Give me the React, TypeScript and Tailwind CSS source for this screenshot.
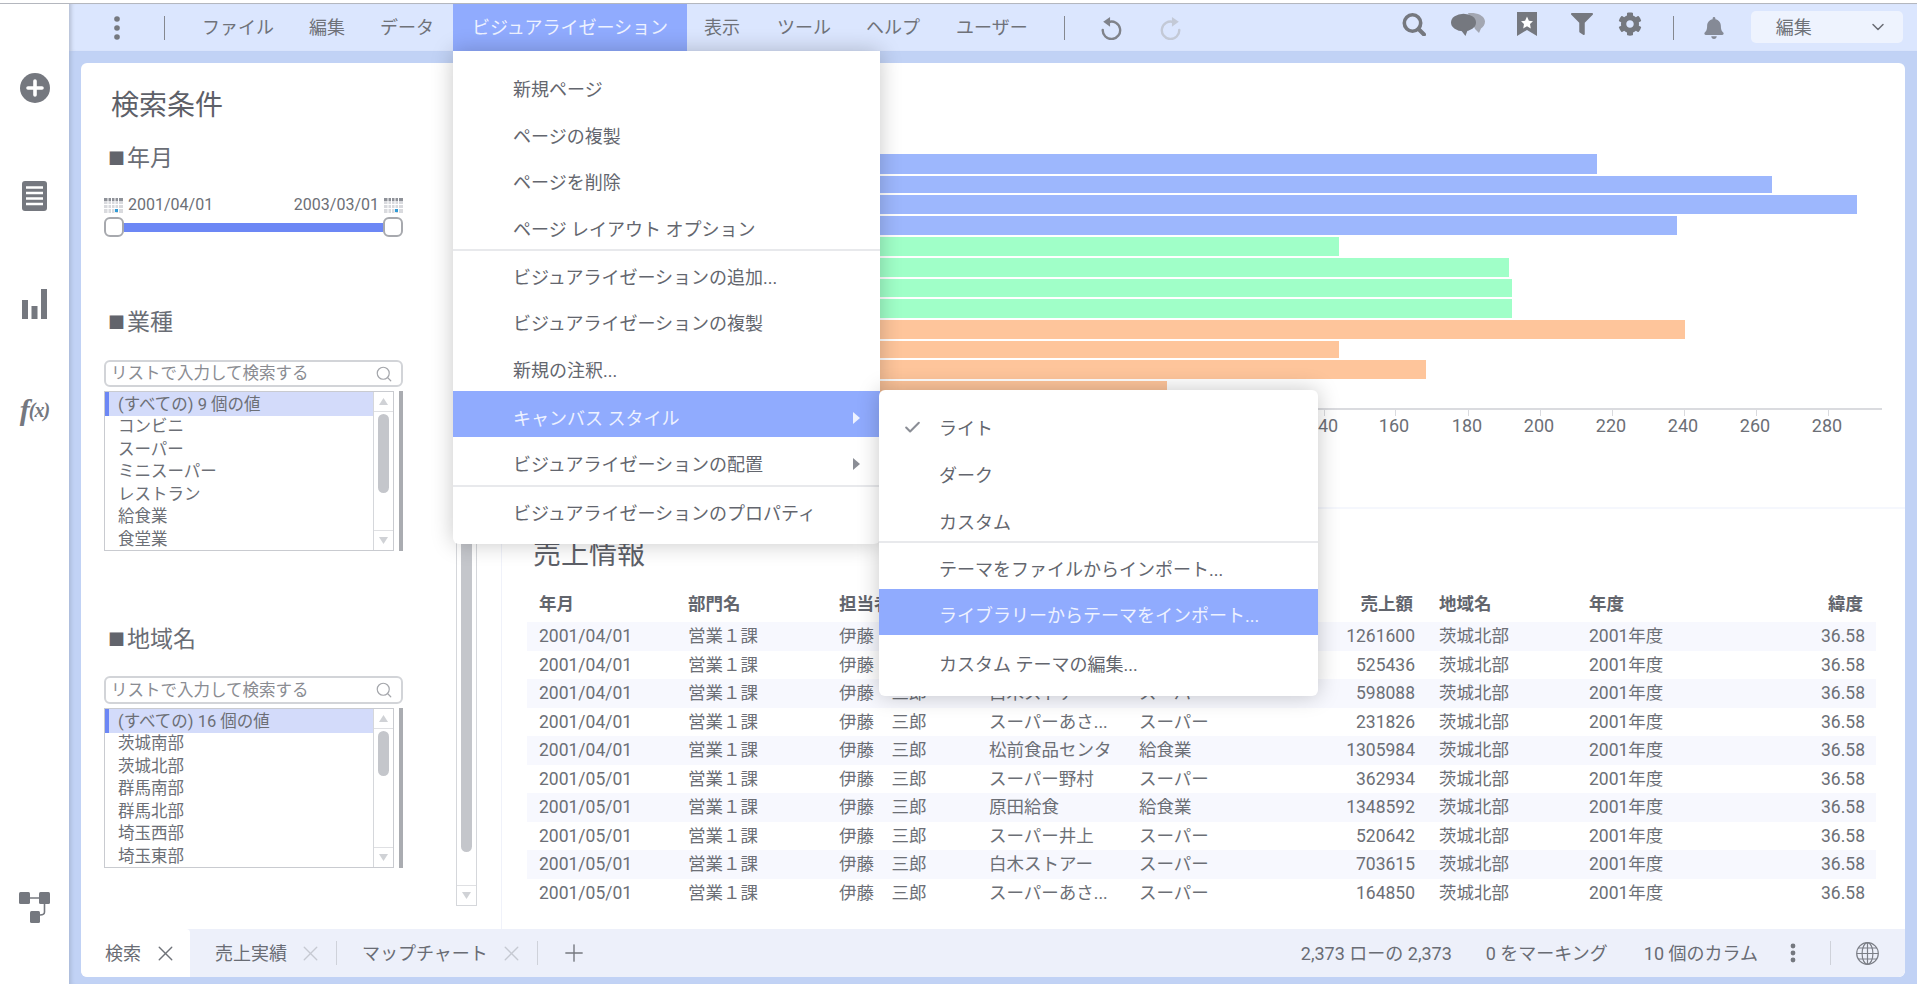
import React from "react";
import { FaFilter, FaCog, FaBell } from "react-icons/fa";
import { X, Plus, Search, ChevronDown, Check } from "lucide-react";

const MUTED = "#75787f";

function Dots({ color = MUTED }: { color?: string }) {
  return (
    <svg width="6" height="24" viewBox="0 0 6 24" className="shrink-0">
      <circle cx="3" cy="3" r="2.8" fill={color} />
      <circle cx="3" cy="12" r="2.8" fill={color} />
      <circle cx="3" cy="21" r="2.8" fill={color} />
    </svg>
  );
}

function CircleArrow({ flip, color }: { flip?: boolean; color: string }) {
  return (
    <svg width="22" height="24" viewBox="0 0 24 26" className={flip ? "-scale-x-100" : ""}>
      <path d="M9.5 6.5 A 9.5 9.5 0 1 1 3 15" fill="none" stroke={color} strokeWidth="2.6" strokeLinecap="round" />
      <path d="M11 1 L11 11.5 L3.5 6.3 Z" fill={color} />
    </svg>
  );
}

function BookmarkStar() {
  return (
    <svg width="20" height="24" viewBox="0 0 20 24">
      <path d="M0 0 H20 V24 L10 18 L0 24 Z" fill={MUTED} />
      <path d="M10 4.5 L11.9 8.7 L16 9.2 L13 12.1 L13.8 16.4 L10 14.2 L6.2 16.4 L7 12.1 L4 9.2 L8.1 8.7 Z" fill="#fff" />
    </svg>
  );
}

function ChatIcon() {
  return (
    <svg width="34" height="23" viewBox="0 0 34 23">
      <path d="M17 0 C26 -1 34 3 34 8.5 C34 12 32 14 30 15.5 L28 20 L24 16 Z" fill="#a3a7b2" />
      <ellipse cx="12.5" cy="9.5" rx="12.5" ry="8.8" fill={MUTED} />
      <path d="M9 16 L14.5 23 L17 16 Z" fill={MUTED} />
    </svg>
  );
}

function SearchGlyph() {
  return (
    <svg width="24" height="23" viewBox="0 0 24 23" className="block">
      <circle cx="10.5" cy="10" r="8.2" fill="none" stroke={MUTED} strokeWidth="3.6" />
      <path d="M16.5 16 L22 21.5" stroke={MUTED} strokeWidth="4" strokeLinecap="round" />
    </svg>
  );
}

function GlobeGlyph() {
  return (
    <svg width="23" height="23" viewBox="0 0 23 23" fill="none" stroke="#7c7f87" strokeWidth="1.2" className="block">
      <circle cx="11.5" cy="11.5" r="10.8" />
      <ellipse cx="11.5" cy="11.5" rx="5.4" ry="10.8" />
      <path d="M11.5 0.7 V22.3 M0.7 11.5 H22.3 M2.3 6 H20.7 M2.3 17 H20.7" />
    </svg>
  );
}

function CalendarIcon() {
  return (
    <svg width="19" height="15" viewBox="0 0 19 15" className="shrink-0">
      <rect x="0" y="0" width="19" height="15" fill="#d9dade" />
      <rect x="0" y="0" width="19" height="3" fill="#8e9198" />
      {[3.5, 7, 10.5, 14].map((x) => (
        <rect key={x} x={x} y="0" width="1" height="15" fill="#fff" />
      ))}
      {[6, 10].map((y) => (
        <rect key={y} x="0" y={y} width="19" height="1" fill="#fff" />
      ))}
      <rect x="11" y="11" width="3" height="3" fill="#2f9bd6" />
    </svg>
  );
}

function Rail() {
  return (
    <div className="w-[69px] shrink-0 bg-white flex flex-col items-center text-[#75787f]">
      <svg width="30" height="30" viewBox="0 0 30 30" className="mt-[69px]">
        <circle cx="15" cy="15" r="15" fill={MUTED} />
        <path d="M15 8 V22 M8 15 H22" stroke="#fff" strokeWidth="3.6" strokeLinecap="round" />
      </svg>
      <svg width="25" height="30" viewBox="0 0 25 30" className="mt-[78px]">
        <rect width="25" height="30" rx="3" fill={MUTED} />
        <path d="M4 6.5 H21 M4 12 H21 M4 17.5 H21 M4 23 H21" stroke="#fff" strokeWidth="2.4" />
      </svg>
      <svg width="25" height="30" viewBox="0 0 25 30" className="mt-[78px]">
        <rect x="0" y="11" width="6" height="19" fill={MUTED} />
        <rect x="9.5" y="17" width="6" height="13" fill={MUTED} />
        <rect x="19" y="0" width="6" height="30" fill={MUTED} />
      </svg>
      <div className="mt-[78px] h-[26px] flex items-center font-['Liberation_Serif',serif] italic font-bold text-[30px] leading-none tracking-[-1px]">
        f<span className="text-[20px]">(x)</span>
      </div>
      <svg width="31" height="31" viewBox="0 0 31 31" className="mt-auto mb-[61px]">
        <rect x="0" y="0" width="11" height="12" rx="1.5" fill={MUTED} />
        <rect x="20" y="0" width="11" height="12" rx="1.5" fill={MUTED} />
        <rect x="11" y="19" width="10" height="12" rx="1.5" fill={MUTED} />
        <path d="M11 6 H20 M25.5 12 V20 Q25.5 23 21 23" stroke={MUTED} strokeWidth="1.6" fill="none" />
      </svg>
    </div>
  );
}

function Toolbar() {
  return (
    <div className="h-[47px] shrink-0 bg-[#dbe6fe] shadow-[inset_5px_0_4px_-3px_rgba(0,0,0,0.18)] flex items-center text-[18px] text-[#6f7279]">
      <div className="ml-[45px]"><Dots /></div>
      <div className="ml-[44px] w-px h-[24px] bg-[#85888f]" />
      <span className="ml-[37px] whitespace-nowrap">ファイル</span>
      <span className="ml-[35px] whitespace-nowrap">編集</span>
      <span className="ml-[35px] whitespace-nowrap">データ</span>
      <div className="ml-[19px] w-[234px] h-full bg-[#90abfe] text-[#eef2ff] flex items-center pl-[19px] whitespace-nowrap">
        ビジュアライゼーション
      </div>
      <span className="ml-[17px] whitespace-nowrap">表示</span>
      <span className="ml-[37px] whitespace-nowrap">ツール</span>
      <span className="ml-[35px] whitespace-nowrap">ヘルプ</span>
      <span className="ml-[36px] whitespace-nowrap">ユーザー</span>
      <div className="ml-[36px] w-px h-[24px] bg-[#85888f]" />
      <div className="ml-[35px] w-[24px]"><CircleArrow color="#7f828a" /></div>
      <div className="ml-[36px] w-[24px]"><CircleArrow flip color="#c3c9d6" /></div>
      <div className="ml-[218px] mb-[7px] w-[24px]"><SearchGlyph /></div>
      <div className="ml-[25px] mb-[7px] w-[36px]"><ChatIcon /></div>
      <div className="ml-[30px] mb-[7px] w-[20px]"><BookmarkStar /></div>
      <div className="ml-[34px] mb-[7px] w-[22px] text-[#75787f]"><FaFilter size={22} /></div>
      <div className="ml-[25px] mb-[7px] w-[24px] text-[#75787f]"><FaCog size={24} /></div>
      <div className="ml-[31px] w-px h-[24px] bg-[#85888f]" />
      <div className="ml-[29px] w-[20px] text-[#858a96]"><FaBell size={22} /></div>
      <div className="ml-[28px] w-[152px] h-[32px] mb-[1px] bg-[#eef3fe] rounded-[5px] flex items-center justify-between pl-[25px] pr-[15px]">
        <span>編集</span>
        <ChevronDown size={20} strokeWidth={1.8} className="text-[#696c74]" />
      </div>
    </div>
  );
}

function Triangle({ up }: { up?: boolean }) {
  return (
    <svg width="9" height="7" viewBox="0 0 9 7">
      <path d={up ? "M4.5 0 L9 7 H0 Z" : "M0 0 H9 L4.5 7 Z"} fill="#d0d2d6" />
    </svg>
  );
}

function ListBox({ items, thumb }: { items: string[]; thumb: string }) {
  return (
    <div className="mt-[4px] flex w-[299px] h-[160px]">
      <div className="w-[290px] h-full border border-[#c9cbd0] flex">
        <div className="flex-1 overflow-hidden text-[16.5px] text-[#6c6f76]">
          {items.map((t, i) => (
            <div
              key={t}
              className={
                i === 0
                  ? "h-[24px] leading-[26px] border-l-4 border-[#6c87f5] bg-[#d3dbfa] pl-[9px] whitespace-nowrap"
                  : "h-[22.5px] leading-[22.5px] pl-[13px] whitespace-nowrap"
              }
            >
              {t}
            </div>
          ))}
        </div>
        <div className="w-[20px] border-l border-[#d5d7db] flex flex-col items-center">
          <div className="w-full h-[20px] border-b border-[#dfe0e3] flex items-center justify-center"><Triangle up /></div>
          <div className="flex-1 pt-[2px]">
            <div className={thumb} />
          </div>
          <div className="w-full h-[20px] border-t border-[#dfe0e3] flex items-center justify-center"><Triangle /></div>
        </div>
      </div>
      <div className="ml-[5px] w-[4px] h-full bg-[#aaacb1]" />
    </div>
  );
}

function FieldLabel({ children, className }: { children: string; className: string }) {
  return (
    <div className={className}>
      <span className="inline-block w-[19px] text-[17px] text-[#62646c] leading-[30px] align-top -ml-[1px]">■</span>
      <span className="text-[23px] leading-[30px] text-[#6a6d75]">{children}</span>
    </div>
  );
}

function SearchBox({ className }: { className: string }) {
  return (
    <div className={className}>
      <span className="text-[16.5px] text-[#8a8c92] whitespace-nowrap -ml-[2px] pt-[2px]">リストで入力して検索する</span>
      <Search size={18} strokeWidth={1.6} className="text-[#a4a6ab]" />
    </div>
  );
}

const TYPES = ["(すべての) 9 個の値", "コンビニ", "スーパー", "ミニスーパー", "レストラン", "給食業", "食堂業"];
const AREAS = ["(すべての) 16 個の値", "茨城南部", "茨城北部", "群馬南部", "群馬北部", "埼玉西部", "埼玉東部"];

function LeftPanel() {
  return (
    <div className="w-[421px] shrink-0 border-r border-[#f0f2fa] flex">
      <div className="w-[375px] shrink-0">
        <div className="pl-[30px] pt-[23px] text-[28px] leading-[40px] text-[#5d6068]">検索条件</div>
        <div className="pl-[23px]">
          <FieldLabel className="mt-[18px] pl-[5px] h-[30px]">年月</FieldLabel>
          <div className="mt-[21px] w-[299px] h-[20px] flex items-center text-[16px] text-[#6c6f76]">
            <CalendarIcon />
            <span className="ml-[5px]">2001/04/01</span>
            <span className="ml-auto mr-[5px]">2003/03/01</span>
            <CalendarIcon />
          </div>
          <div className="mt-[2px] w-[299px] h-[20px] flex items-center">
            <div className="w-[20px] h-[20px] rounded-[6px] border-2 border-[#a7a9ae] bg-white shrink-0" />
            <div className="flex-1 h-[9px] bg-[#6c87f5]" />
            <div className="w-[20px] h-[20px] rounded-[6px] border-2 border-[#a7a9ae] bg-white shrink-0" />
          </div>
          <FieldLabel className="mt-[71px] pl-[5px] h-[30px]">業種</FieldLabel>
          <SearchBox className="mt-[22px] w-[299px] h-[27px] border-2 border-[#d2d4d8] rounded-[6px] flex items-center justify-between pl-[7px] pr-[8px]" />
          <ListBox items={TYPES} thumb="w-[11px] h-[79px] rounded-full bg-[#c4c6cb]" />
          <FieldLabel className="mt-[74px] pl-[5px] h-[30px]">地域名</FieldLabel>
          <SearchBox className="mt-[21px] w-[299px] h-[28px] border-2 border-[#d2d4d8] rounded-[6px] flex items-center justify-between pl-[7px] pr-[8px]" />
          <ListBox items={AREAS} thumb="w-[11px] h-[45px] rounded-full bg-[#c4c6cb]" />
        </div>
      </div>
      <div className="mt-[7px] w-[21px] h-[836px] border border-[#d5d7db] flex flex-col items-center">
        <div className="flex-1 w-full flex justify-center">
          <div className="w-[11px] h-[781px] rounded-b-full bg-[#c4c6cb]" />
        </div>
        <div className="w-full h-[20px] border-t border-[#dfe0e3] flex items-center justify-center"><Triangle /></div>
      </div>
    </div>
  );
}

const BARS: [number, number, number, string][] = [
  [154, 20, 1597, "#9db7fd"],
  [176, 17, 1772, "#9db7fd"],
  [195, 19, 1857, "#9db7fd"],
  [216, 19, 1677, "#9db7fd"],
  [237, 19, 1339, "#a0ffc8"],
  [258, 19, 1509, "#a0ffc8"],
  [279, 18, 1512, "#a0ffc8"],
  [299, 19, 1512, "#a0ffc8"],
  [320, 19, 1685, "#fec59b"],
  [341, 17, 1339, "#fec59b"],
  [360, 19, 1426, "#fec59b"],
  [381, 19, 1167, "#fec59b"],
];

const TICKS: [number, string][] = [
  [1324, "140"],
  [1395, "160"],
  [1468, "180"],
  [1540, "200"],
  [1612, "220"],
  [1684, "240"],
  [1756, "260"],
  [1828, "280"],
];

function Chart() {
  return (
    <div className="h-[446px] shrink-0 border-b-2 border-[#f5f7fd]">
      <svg width="1403" height="444" viewBox="502 63 1403 444" className="block">
        {BARS.map(([y, h, x2, fill]) => (
          <rect key={y} x="620" y={y} width={x2 - 620} height={h} fill={fill} />
        ))}
        <rect x="620" y="408" width="1262" height="2" fill="#dadbdf" />
        {TICKS.map(([x, t]) => (
          <g key={t}>
            <rect x={x} y="410" width="1" height="6" fill="#dadbdf" />
            <text x={x - 1} y="432" textAnchor="middle" fontSize="18" fill="#6c6f76" fontFamily="Roboto, sans-serif">
              {t}
            </text>
          </g>
        ))}
      </svg>
    </div>
  );
}

type Row = [string, string, string, string];
const ROWS: Row[] = [
  ["2001/04/01", "松前食品センタ", "給食業", "1261600"],
  ["2001/04/01", "スーパー井上", "スーパー", "525436"],
  ["2001/04/01", "白木ストアー", "スーパー", "598088"],
  ["2001/04/01", "スーパーあさ...", "スーパー", "231826"],
  ["2001/04/01", "松前食品センタ", "給食業", "1305984"],
  ["2001/05/01", "スーパー野村", "スーパー", "362934"],
  ["2001/05/01", "原田給食", "給食業", "1348592"],
  ["2001/05/01", "スーパー井上", "スーパー", "520642"],
  ["2001/05/01", "白木ストアー", "スーパー", "703615"],
  ["2001/05/01", "スーパーあさ...", "スーパー", "164850"],
];

function SalesTable() {
  const grid = "grid grid-cols-[149px_151px_150px_150px_150px_126px_174px_150px_126px] pl-[12px] pr-[11px] items-center whitespace-nowrap";
  return (
    <div className="flex-1 pt-[26px]">
      <div className="pl-[31px] text-[28px] leading-[40px] text-[#5d6068]">売上情報</div>
      <div className="mt-[15px] ml-[25px] w-[1349px] text-[17.5px] text-[#6c6f76]">
        <div className={`${grid} h-[32px] pb-[3px] font-bold text-[#62656d]`}>
          <span>年月</span>
          <span>部門名</span>
          <span>担当者</span>
          <span>得意先</span>
          <span>業種</span>
          <span className="text-right pr-[2px]">売上額</span>
          <span className="pl-[24px]">地域名</span>
          <span>年度</span>
          <span className="text-right pr-[2px]">緯度</span>
        </div>
        {ROWS.map((r, i) => (
          <div key={i} className={`${grid} h-[28.5px] ${i % 2 === 0 ? "bg-[#f7f8fe]" : "bg-white"}`}>
            <span>{r[0]}</span>
            <span>営業１課</span>
            <span>伊藤　三郎</span>
            <span>{r[1]}</span>
            <span>{r[2]}</span>
            <span className="text-right">{r[3]}</span>
            <span className="pl-[24px]">茨城北部</span>
            <span>2001年度</span>
            <span className="text-right">36.58</span>
          </div>
        ))}
      </div>
    </div>
  );
}

function TabBar() {
  return (
    <div className="h-[48px] shrink-0 bg-[#edf0fa] rounded-b-[6px] flex items-center text-[18px] text-[#696c74]">
      <div className="w-[109px] h-full bg-white rounded-bl-[6px] rounded-tr-[4px] flex items-center pl-[24px]">
        <span>検索</span>
        <X size={25} strokeWidth={1.3} className="ml-[12px] text-[#6f7279]" />
      </div>
      <span className="ml-[25px] whitespace-nowrap">売上実績</span>
      <X size={25} strokeWidth={1.3} className="ml-[11px] text-[#c6c9d2]" />
      <div className="ml-[13px] w-px h-[24px] bg-[#cfd2da]" />
      <span className="ml-[25px] whitespace-nowrap">マップチャート</span>
      <X size={25} strokeWidth={1.3} className="ml-[11px] text-[#c6c9d2]" />
      <div className="ml-[13px] w-px h-[24px] bg-[#cfd2da]" />
      <Plus size={28} strokeWidth={1.2} className="ml-[22px] text-[#75787f]" />
      <div className="ml-auto flex items-center pr-[26px] text-[18px]">
        <span className="whitespace-nowrap">2,373 ローの 2,373</span>
        <span className="ml-[34px] whitespace-nowrap">0 をマーキング</span>
        <span className="ml-[36px] whitespace-nowrap">10 個のカラム</span>
        <div className="ml-[32px]">
          <svg width="6" height="20" viewBox="0 0 6 20" className="block">
            <circle cx="3" cy="3" r="2.4" fill={MUTED} />
            <circle cx="3" cy="10" r="2.4" fill={MUTED} />
            <circle cx="3" cy="17" r="2.4" fill={MUTED} />
          </svg>
        </div>
        <div className="ml-[34px] w-px h-[24px] bg-[#cfd2da]" />
        <div className="ml-[25px]"><GlobeGlyph /></div>
      </div>
    </div>
  );
}

function Arrow({ color }: { color: string }) {
  return (
    <svg width="7" height="12" viewBox="0 0 7 12" className="shrink-0">
      <path d="M0 0 L7 6 L0 12 Z" fill={color} />
    </svg>
  );
}

function VizMenu() {
  const top = "h-[46.7px] flex items-center pl-[60px] whitespace-nowrap";
  const item = "h-[46px] flex items-center pl-[60px] whitespace-nowrap";
  return (
    <div className="absolute left-[384px] top-[47px] w-[427px] h-[493px] bg-white rounded-b-[6px] shadow-[0_0_22px_rgba(0,0,0,0.22)] text-[18px] text-[#63666e] z-10">
      <div className="pt-[15px] h-[200px] border-b-2 border-[#e8e9ec]">
        <div className={top}>新規ページ</div>
        <div className={top}>ページの複製</div>
        <div className={top}>ページを削除</div>
        <div className={top}>ページ レイアウト オプション</div>
      </div>
      <div className="pt-[2px] h-[236px] border-b-2 border-[#e8e9ec]">
        <div className={`${item} pt-[2px]`}>ビジュアライゼーションの追加...</div>
        <div className={`${item} pt-[2px]`}>ビジュアライゼーションの複製</div>
        <div className={`${item} pt-[4px]`}>新規の注釈...</div>
        <div className="h-[46px] flex items-center justify-between pl-[60px] pr-[20px] pt-[8px] bg-[#90abfe] text-[#eef2ff] whitespace-nowrap">
          <span>キャンバス スタイル</span>
          <Arrow color="#eef2ff" />
        </div>
        <div className="h-[46px] flex items-center justify-between pl-[60px] pr-[20px] pt-[8px] whitespace-nowrap">
          <span>ビジュアライゼーションの配置</span>
          <Arrow color="#8b8e96" />
        </div>
      </div>
      <div className="pt-[3px]">
        <div className={item}>ビジュアライゼーションのプロパティ</div>
      </div>
    </div>
  );
}

function ThemeMenu() {
  const lead = "w-[60px] pl-[24px] shrink-0";
  return (
    <div className="absolute left-[810px] top-[386px] w-[439px] h-[306px] bg-white rounded-[6px] shadow-[0_0_22px_rgba(0,0,0,0.22)] text-[18px] text-[#63666e] z-20 whitespace-nowrap">
      <div className="pt-[15px] h-[153px] border-b-2 border-[#e8e9ec]">
        <div className="h-[47px] flex items-center">
          <div className={lead}><Check size={19} strokeWidth={2.6} className="text-[#8b8e96] -mt-[2px]" /></div>
          <span>ライト</span>
        </div>
        <div className="h-[47px] flex items-center">
          <div className={lead} />
          <span>ダーク</span>
        </div>
        <div className="h-[43px] flex items-center pt-[3px]">
          <div className={lead} />
          <span>カスタム</span>
        </div>
      </div>
      <div className="h-[46px] flex items-center pt-[6px]">
        <div className={lead} />
        <span>テーマをファイルからインポート...</span>
      </div>
      <div className="h-[46px] flex items-center pt-[6px] bg-[#90abfe] text-[#eef2ff]">
        <div className={lead} />
        <span>ライブラリーからテーマをインポート...</span>
      </div>
      <div className="h-[46px] flex items-center pt-[12px]">
        <div className={lead} />
        <span>カスタム テーマの編集...</span>
      </div>
    </div>
  );
}

export default function App() {
  return (
    <div lang="ja" className="w-[1917px] h-[984px] overflow-hidden flex flex-col bg-white font-[Roboto,'Noto_Sans_CJK_JP',sans-serif]">
      <div className="h-[3px] shrink-0 bg-white" />
      <div className="h-px shrink-0 bg-[#b4b7be]" />
      <div className="flex-1 flex min-h-0">
        <Rail />
        <div className="relative flex-1 flex flex-col bg-[#c1d2f5]">
          <Toolbar />
          <div className="flex-1 min-h-0 px-[12px] pt-[12px] pb-[7px] shadow-[inset_5px_0_4px_-3px_rgba(0,0,0,0.12)]">
            <div className="h-full bg-white rounded-[6px] flex flex-col overflow-hidden">
              <div className="flex-1 flex min-h-0">
                <LeftPanel />
                <div className="flex-1 flex flex-col min-w-0">
                  <Chart />
                  <SalesTable />
                </div>
              </div>
              <TabBar />
            </div>
          </div>
          <VizMenu />
          <ThemeMenu />
        </div>
      </div>
    </div>
  );
}
